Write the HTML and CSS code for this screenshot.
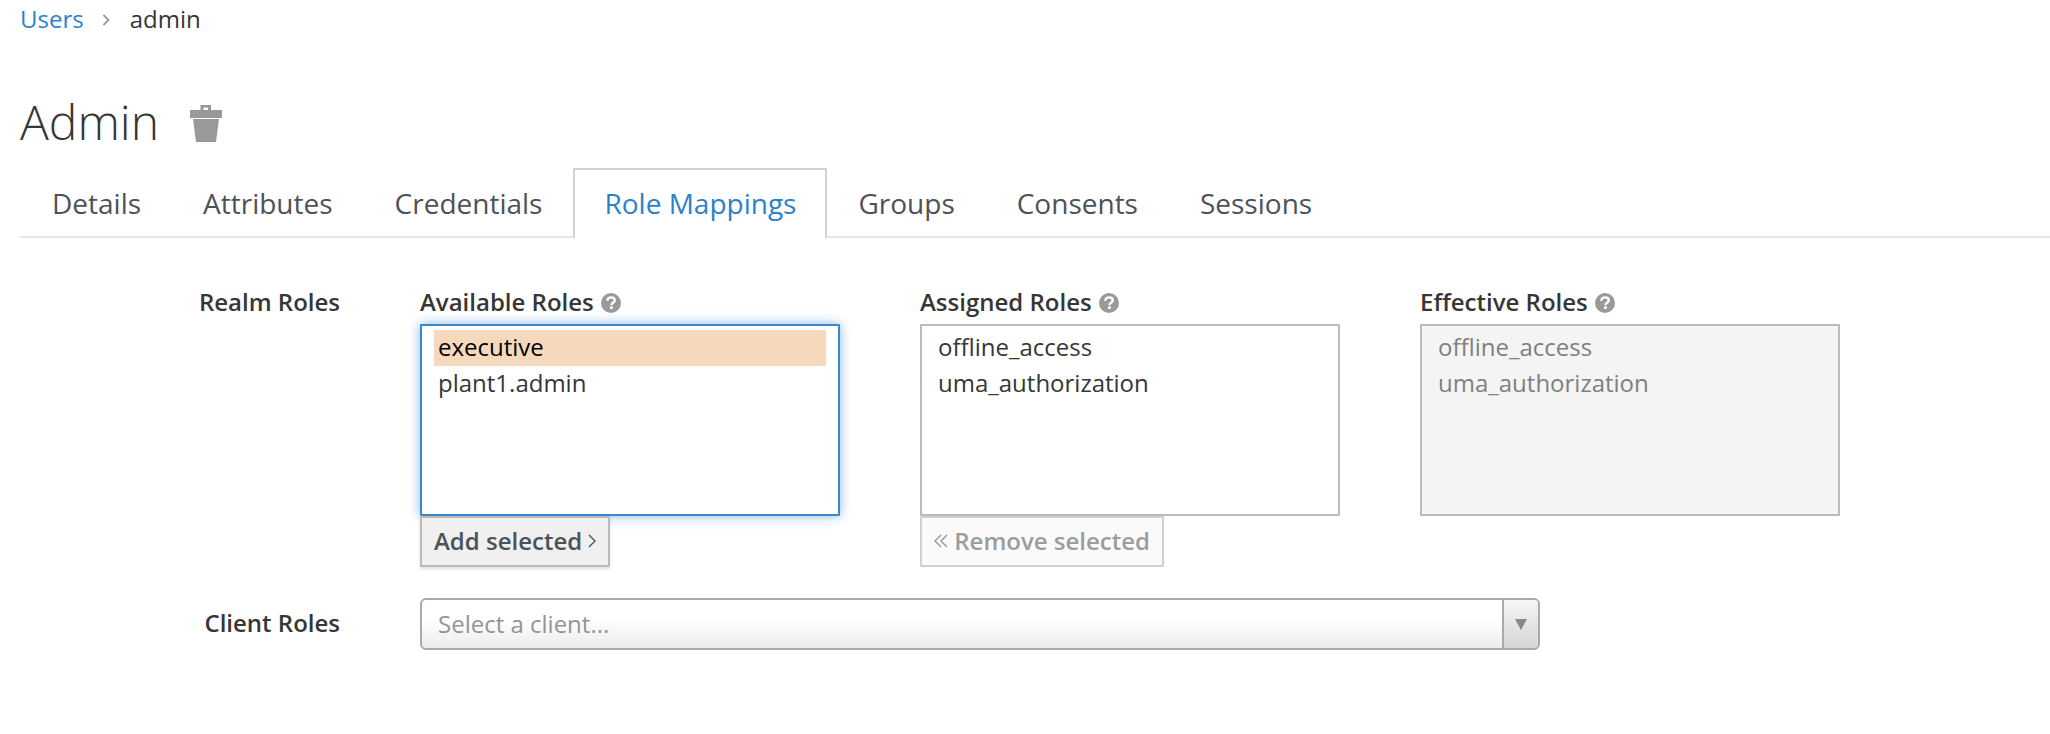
FILE: index.html
```html
<!DOCTYPE html>
<html lang="en">
<head>
<meta charset="utf-8">
<title>Admin - Role Mappings</title>
<link rel="stylesheet" href="styles.css">
</head>
<body>
<nav class="crumbs"><a class="link" href="#">Users</a><svg class="crumb-sep" width="9" height="14" viewBox="0 0 9 14"><path d="M1.500 2l5 5-5 5" fill="none" stroke="#999" stroke-width="1.800"/></svg><span>admin</span></nav>
<header class="title">
  <h1>Admin</h1>
  <svg class="trash" width="32" height="37" viewBox="0 0 32 37"><path fill="#999" fill-rule="evenodd" d="M10.500 0H21v5h11v8H0V5h10.500zM13.500 2.500V5H18V2.500zM3 14h26l-3 23H6z"/></svg>
</header>
<ul class="tabs">
  <li class="tab">Details</li>
  <li class="tab">Attributes</li>
  <li class="tab">Credentials</li>
  <li class="tab active">Role Mappings</li>
  <li class="tab">Groups</li>
  <li class="tab">Consents</li>
  <li class="tab">Sessions</li>
</ul>
<form class="form">
  <div class="row roles-row">
    <div class="row-label">Realm Roles</div>
    <div class="col">
      <div class="col-head">Available Roles <svg class="help" width="20" height="20" viewBox="0 0 20 20"><circle cx="10" cy="10" r="10" fill="#999"/><path d="M6.300 7.800c0-2.200 1.700-3.400 3.800-3.400s3.600 1.200 3.600 3c0 2.500-3.200 2.300-3.200 4.500" fill="none" stroke="#fff" stroke-width="2.400"/><rect x="9" y="13.200" width="2.800" height="2.800" fill="#fff"/></svg></div>
      <div class="listbox focus">
        <div class="opt selected">executive</div>
        <div class="opt">plant1.admin</div>
      </div>
      <button type="button" class="btn">Add selected <svg class="chev" width="8" height="14" viewBox="0 0 8 14"><path d="M1 1l6 6-6 6" fill="none" stroke="#4d5258" stroke-width="1.400"/></svg></button>
    </div>
    <div class="col">
      <div class="col-head">Assigned Roles <svg class="help" width="20" height="20" viewBox="0 0 20 20"><circle cx="10" cy="10" r="10" fill="#999"/><path d="M6.300 7.800c0-2.200 1.700-3.400 3.800-3.400s3.600 1.200 3.600 3c0 2.500-3.200 2.300-3.200 4.500" fill="none" stroke="#fff" stroke-width="2.400"/><rect x="9" y="13.200" width="2.800" height="2.800" fill="#fff"/></svg></div>
      <div class="listbox">
        <div class="opt">offline_access</div>
        <div class="opt">uma_authorization</div>
      </div>
      <button type="button" class="btn disabled" disabled><svg class="chev-l" width="14" height="14" viewBox="0 0 14 14"><path d="M7 1L1 7l6 6M13 1L7 7l6 6" fill="none" stroke="#9c9c9c" stroke-width="1.500"/></svg> Remove selected</button>
    </div>
    <div class="col">
      <div class="col-head">Effective Roles <svg class="help" width="20" height="20" viewBox="0 0 20 20"><circle cx="10" cy="10" r="10" fill="#999"/><path d="M6.300 7.800c0-2.200 1.700-3.400 3.800-3.400s3.600 1.200 3.600 3c0 2.500-3.200 2.300-3.200 4.500" fill="none" stroke="#fff" stroke-width="2.400"/><rect x="9" y="13.200" width="2.800" height="2.800" fill="#fff"/></svg></div>
      <div class="listbox readonly">
        <div class="opt">offline_access</div>
        <div class="opt">uma_authorization</div>
      </div>
    </div>
  </div>
  <div class="row client-row">
    <div class="row-label">Client Roles</div>
    <div class="select">
      <span class="placeholder">Select a client...</span>
      <span class="select-arrow"><svg width="12" height="11" viewBox="0 0 12 11"><path d="M0 0h12L6 11z" fill="#888"/></svg></span>
    </div>
  </div>
</form>
</body>
</html>
```

FILE: styles.css
```css
* { box-sizing: border-box; }
html, body { margin: 0; padding: 0; }
body {
  padding: 0 0 0 20px;
  font-family: "Open Sans", "Noto Sans", sans-serif;
  font-size: 24px;
  color: #363636;
  background: #fff;
  height: 734px;
  overflow: hidden;
}
.crumbs {
  display: flex;
  align-items: center;
  height: 38px;
  font-size: 24px;
  line-height: 38px;
}
.link { color: #2b82cc; text-decoration: none; }
.crumb-sep { margin: 2px 19px 0 18px; }
.title {
  display: flex;
  align-items: center;
  height: 54px;
  margin-top: 57px;
}
.title h1 {
  margin: 0;
  font-size: 48px;
  font-weight: 300;
  line-height: 54px;
  color: #363636;
}
.trash { margin: 3px 0 0 31px; }
.tabs {
  display: flex;
  list-style: none;
  margin: 19px 0 0;
  padding: 0;
  height: 70px;
  border-bottom: 2px solid #e6e6e6;
}
.tab {
  height: 70px;
  padding: 0 29px;
  line-height: 67px;
  font-size: 28px;
  color: #4d5258;
  border: 2px solid transparent;
  border-bottom: 0;
}
.tab:first-child { margin-left: 1px; }
.tab.active {
  color: #2b82cc;
  background: #fff;
  border-color: #d1d1d1;
}
.form { padding-top: 49px; }
.row { display: flex; }
.row-label {
  width: 320px;
  flex: none;
  margin-right: 80px;
  text-align: right;
  font-weight: 600;
  font-size: 24px;
  line-height: 30px;
}
.client-row .row-label { margin-bottom: 3px; }
.roles-row { height: 311px; }
.col { width: 420px; flex: none; margin: 0 80px 0 0; }
.col-head {
  display: flex;
  align-items: center;
  gap: 7px;
  height: 30px;
  margin-bottom: 7px;
  font-weight: 600;
  font-size: 24px;
  line-height: 30px;
}
.help { flex: none; margin-top: 1px; }
.listbox {
  height: 192px;
  padding: 4px 12px;
  border: 2px solid #bbb;
  border-radius: 1px;
  background: #fff;
  font-size: 24px;
  color: #363636;
}
.listbox.focus {
  border-color: #3b88cc;
  box-shadow: 0 0 12px rgba(59, 136, 204, .6);
}
.listbox.readonly {
  background: #f4f4f4;
  border-color: #bbb;
  color: #7f7f7f;
}
.opt {
  height: 36px;
  line-height: 34px;
  padding: 0 4px;
}
.opt.selected {
  background: #f6d8bc;
  color: #000;
}
.btn {
  display: flex;
  align-items: center;
  height: 51px;
  margin: 0;
  padding: 0 12px 2px;
  font: 600 24px/30px "Open Sans", "Noto Sans", sans-serif;
  color: #4d5258;
  background: #f0f0f0;
  border: 2px solid #bbb;
  border-radius: 1px;
  box-shadow: 0 2px 3px rgba(0, 0, 0, .12);
  white-space: pre;
  position: relative;
}
.btn.disabled {
  color: #9c9c9c;
  background: #fafafa;
  border-color: #d1d1d1;
  box-shadow: none;
}
.client-row { align-items: center; height: 52px; }
.select {
  display: flex;
  width: 1120px;
  height: 52px;
  border: 2px solid #aaa;
  border-radius: 6px;
  background: linear-gradient(to bottom, #fff 40%, #ececec 100%);
}
.placeholder {
  flex: 1;
  padding-left: 16px;
  line-height: 48px;
  color: #949494;
}
.select-arrow {
  display: flex;
  align-items: center;
  justify-content: center;
  width: 36px;
  flex: none;
  border-left: 2px solid #aaa;
  background: linear-gradient(to bottom, #f6f6f6, #d5d5d5);
  border-radius: 0 4px 4px 0;
}
```
